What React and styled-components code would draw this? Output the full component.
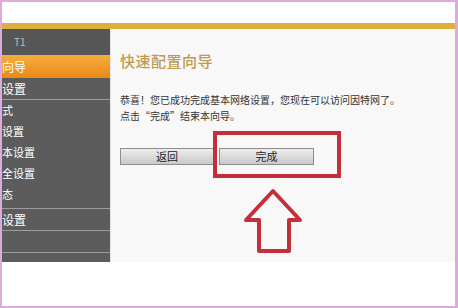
import styled, { createGlobalStyle } from 'styled-components';

const GlobalStyle = createGlobalStyle`
  html, body {
    margin: 0;
    padding: 0;
    background: #ffffff;
  }
  body {
    font-family: "Noto Sans CJK SC", "Noto Sans", sans-serif;
  }
`;

const menu = [
  { label: '向导', active: true },
  { label: '设置' },
  { group: ['式', '设置', '本设置', '全设置', '态'] },
  { label: '设置' },
  { label: '' },
];

const App = () => {
  return (
    <>
      <GlobalStyle />
      <Frame>
        <TopBar />
        <GoldBar />
        <Main>
          <Sidebar>
            <SideHeader>T1</SideHeader>
            {menu.map((item, i) =>
              item.group ? (
                <Group key={i}>
                  {item.group.map((g, j) => (
                    <SubItem key={j}>{g}</SubItem>
                  ))}
                </Group>
              ) : (
                <MenuItem key={i} $active={item.active}>
                  {item.label}
                </MenuItem>
              )
            )}
          </Sidebar>
          <Content>
            <Title>快速配置向导</Title>
            <Message>
              恭喜！您已成功完成基本网络设置，您现在可以访问因特网了。
              <br />
              点击“完成”结束本向导。
            </Message>
            <ButtonRow>
              <Button $w={94}>返回</Button>
              <Button $w={95}>完成</Button>
            </ButtonRow>
            <Highlight />
            <Arrow width="64" height="70" viewBox="0 0 64 70">
              <polygon
                points="32,5 5,34 18,34 18,65 48,65 48,34 59,34"
                fill="none"
                stroke="#c3303b"
                strokeWidth="4"
                strokeLinejoin="round"
              />
            </Arrow>
          </Content>
        </Main>
        <Bottom />
      </Frame>
    </>
  );
};

export default App;

const Frame = styled.div`
  width: 458px;
  height: 308px;
  box-sizing: border-box;
  border: 2px solid #dcaadb;
  border-right-width: 3px;
  display: flex;
  flex-direction: column;
  background: #ffffff;
  overflow: hidden;
`;

const TopBar = styled.div`
  height: 21px;
  background: #ffffff;
`;

const GoldBar = styled.div`
  height: 6px;
  background: #dbb03e;
`;

const Main = styled.div`
  height: 233px;
  display: flex;
`;

const Sidebar = styled.div`
  width: 108px;
  background: #5c5c5c;
  display: flex;
  flex-direction: column;
`;

const SideHeader = styled.div`
  height: 26px;
  background: #565656;
  color: #bdbdbd;
  font-size: 10px;
  line-height: 26px;
  padding-left: 12px;
`;

const MenuItem = styled.div`
  height: ${(p) => (p.$active ? 23 : 21)}px;
  line-height: ${(p) => (p.$active ? 23 : 21)}px;
  font-size: 12px;
  color: #ffffff;
  background: ${(p) =>
    p.$active ? 'linear-gradient(#f6ad3e, #e88a18)' : 'transparent'};
  border-bottom: ${(p) => (p.$active ? 'none' : '1px solid #9c9c9c')};
`;

const Group = styled.div`
  display: flex;
  flex-direction: column;
  padding-bottom: 3px;
  border-bottom: 1px solid #9c9c9c;
`;

const SubItem = styled.div`
  height: 21px;
  line-height: 21px;
  font-size: 11px;
  color: #ffffff;
`;

const Content = styled.div`
  position: relative;
  flex: 1;
  background: #f8f8f8;
  border-left: 1px solid #e4e4e4;
  padding: 22px 0 0 9px;
`;

const Title = styled.div`
  font-size: 15px;
  line-height: 20px;
  font-weight: 500;
  color: #bf9a4c;
  letter-spacing: 0.5px;
`;

const Message = styled.div`
  margin-top: 21px;
  font-size: 10px;
  line-height: 16px;
  color: #333333;
`;

const ButtonRow = styled.div`
  margin-top: 24px;
  display: flex;
  gap: 5px;
`;

const Button = styled.div`
  width: ${(p) => p.$w}px;
  height: 17px;
  box-sizing: border-box;
  border: 1px solid #8e8e8e;
  background: linear-gradient(#ededed, #c9c9c9);
  font-size: 11px;
  line-height: 15px;
  text-align: center;
  color: #222222;
`;

const Highlight = styled.div`
  position: absolute;
  left: 102px;
  top: 102px;
  width: 128px;
  height: 47px;
  box-sizing: border-box;
  border: 4px solid #c3303b;
`;

const Arrow = styled.svg`
  position: absolute;
  left: 130px;
  top: 157px;
`;

const Bottom = styled.div`
  flex: 1;
  background: #ffffff;
`;
